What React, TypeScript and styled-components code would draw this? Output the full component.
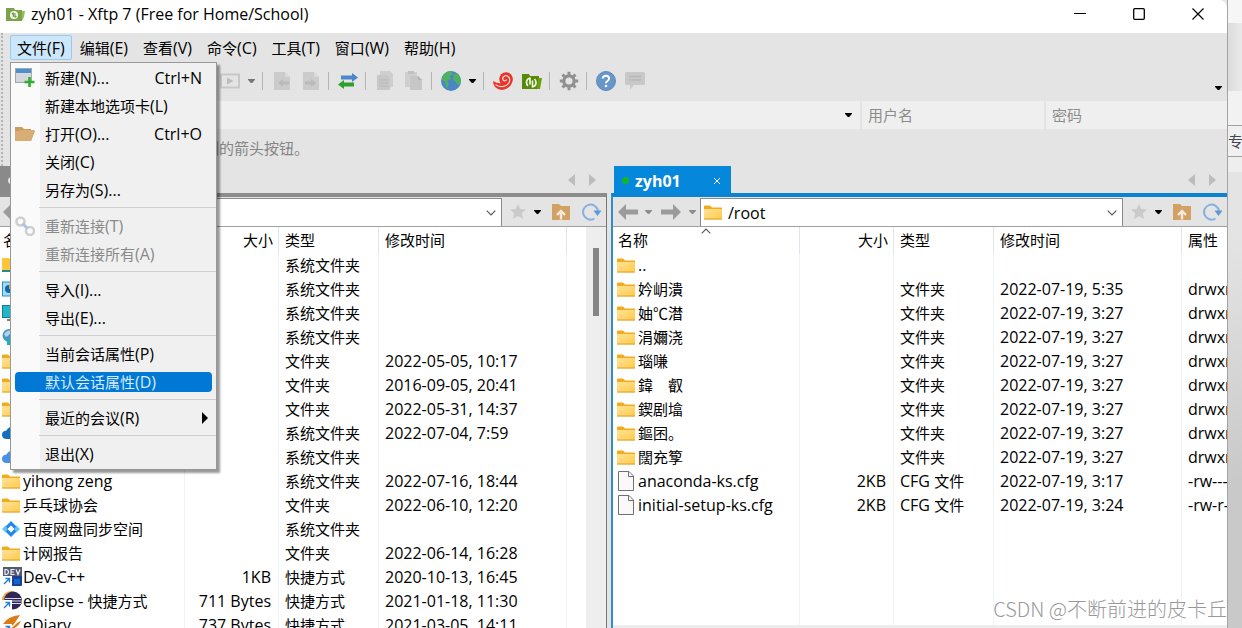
import React from "react";
import styled, { createGlobalStyle, css } from "styled-components";

const GlobalStyle = createGlobalStyle`
  *, *::before, *::after { box-sizing: border-box; }
  body {
    margin: 0;
    background: #e6e6e6;
    color: #000;
    font: 15px/20px "Open Sans", "Noto Sans CJK SC", sans-serif;
    overflow: hidden;
  }
  button, input { font: inherit; color: inherit; }
  button { border: 0; padding: 0; background: none; }
  svg { display: block; flex: none; }
`;

/* ---------- text: Latin runs are set one pixel larger than the CJK runs ---------- */

const Latin = styled.span`
  font-size: 16px;
`;

function Label({ text }: { text: string }) {
  const runs = text.match(/[\u0000-\u024f]+|[^\u0000-\u024f]+/g) ?? [];
  return (
    <>
      {runs.map((run, i) =>
        run.charCodeAt(0) < 0x250 ? <Latin key={i}>{run}</Latin> : <React.Fragment key={i}>{run}</React.Fragment>
      )}
    </>
  );
}

/* ---------- icons ---------- */

const Caret = ({ color = "#000" }: { color?: string }) => (
  <svg width="7" height="4" viewBox="0 0 7 4"><path d="M0 0h7v.8L4.200 4H2.800L0 .8z" fill={color} /></svg>
);

const Chevron = ({ up }: { up?: boolean }) => (
  <svg width="10" height="6" viewBox="0 0 10 6">
    <path d={up ? "M.7 5.3 5 1l4.3 4.3" : "M.7.7 5 5 9.3.7"} fill="none" stroke="#555" strokeWidth="1.1" />
  </svg>
);

const FolderIcon = () => (
  <svg width="18" height="15" viewBox="0 0 18 15">
    <defs>
      <linearGradient id="folder" x1="0" y1="0" x2="1" y2="1">
        <stop offset="0" stopColor="#ffe29a" /><stop offset="1" stopColor="#ffca45" />
      </linearGradient>
    </defs>
    <path d="M0 1.5Q0 .5 1 .5h5l2 2h9.500q.5 0 .5.5v4H0z" fill="#f1ac1c" />
    <rect y="4" width="18" height="10.500" rx=".8" fill="url(#folder)" />
    <path d="M0 14h18" stroke="#dfa02c" />
  </svg>
);

const FileIcon = () => (
  <svg width="18" height="20" viewBox="0 0 18 20">
    <path d="M1.500.5H12L16.500 5v14.500h-15z" fill="#faf8f8" stroke="#707070" />
    <path d="M11.500.5V5.500h5" fill="none" stroke="#707070" />
  </svg>
);

const ShortcutBadge = () => (
  <g>
    <rect y="9" width="10" height="10" fill="#fff" />
    <path d="M2 17l5-5M3.500 11.500H7.500V15.500" fill="none" stroke="#1f7fd0" strokeWidth="1.400" />
  </g>
);

const DevIcon = () => (
  <svg width="20" height="20" viewBox="0 0 20 20">
    <rect x="1" width="19" height="19" rx="1" fill="#1d3f8f" />
    <rect x="1" width="19" height="9" fill="#545a72" />
    <path d="M3 2.500v5h1.500q2-.5 2-2.500t-2-2.500zM12.500 2.500H9v5h3.500M9 5h3M14 2.500l2 5 2-5" fill="none" stroke="#f2f2f6" strokeWidth="1.200" />
    <path d="M12 12h6v5h-6z" fill="#0e67c9" />
    <ShortcutBadge />
  </svg>
);

const EclipseIcon = () => (
  <svg width="20" height="20" viewBox="0 0 20 20">
    <circle cx="9" cy="9" r="9" fill="#f2a33c" />
    <circle cx="11" cy="9.500" r="9" fill="#2f2657" />
    <path d="M3 7.500h16M3 10h17M3 12.500h16" stroke="#d9d6ea" strokeWidth="1.200" />
    <ShortcutBadge />
  </svg>
);

const DiaryIcon = () => (
  <svg width="20" height="20" viewBox="0 0 20 20">
    <path d="M1 9Q6 1 18 0l-6 9 7-3Q14 16 3 14z" fill="#dd7c17" />
    <path d="M3 10q4 4 8 1l8-8" fill="none" stroke="#fff" strokeWidth="1.500" />
    <ShortcutBadge />
  </svg>
);

const BaiduSyncIcon = () => (
  <svg width="18" height="16" viewBox="0 0 18 16">
    <path d="M9 0l7 7-2 1 2 1-7 7-7-7 2-1-2-1z" fill="#2486ea" />
    <path d="M3.500 4.500 0 8l3.500 3.500L5.500 8z" fill="#58c7f5" /><path d="M14.500 4.500 18 8l-3.500 3.500L12.500 8z" fill="#58c7f5" />
    <path d="M9 4.500 12.500 8 9 11.500 5.500 8z" fill="#fff" />
  </svg>
);

const UserFolderIcon = () => (
  <svg width="18" height="16" viewBox="0 0 18 16">
    <path d="M0 1h7l2 2h9v12H0z" fill="#fcc63c" /><path d="M0 13h18v2H0z" fill="#2b8a8a" />
  </svg>
);

const ControlPanelIcon = () => (
  <svg width="18" height="16" viewBox="0 0 18 16">
    <rect x=".5" y="1" width="17" height="14" fill="#9bdcf7" stroke="#2b8fc7" />
    <circle cx="7" cy="8" r="4" fill="#1465b4" /><path d="M7 8V3.500A4.500 4.500 0 0 1 11.500 8z" fill="#f4a020" />
  </svg>
);

const ComputerIcon = () => (
  <svg width="18" height="16" viewBox="0 0 18 16">
    <rect x=".5" y=".5" width="17" height="12" fill="#25b5c9" stroke="#147a96" /><path d="M5 15h8" stroke="#555" strokeWidth="1.500" />
  </svg>
);

const NetworkIcon = () => (
  <svg width="18" height="17" viewBox="0 0 18 17">
    <circle cx="7" cy="6.500" r="6.500" fill="#4b96c2" /><path d="M2 5q4-5 7-3-1 4-5 6z" fill="#a9d8ee" />
    <rect x="5" y="9" width="11" height="7" fill="#23adc0" />
  </svg>
);

const CloudIcon = ({ color }: { color: string }) => (
  <svg width="20" height="14" viewBox="0 0 20 14">
    <path d="M5 13Q0 13 0 8.500 0 5 4.500 4.500 7 0 11.500 1q3.500 1 4 4.500 4 .5 4 4 0 3.500-4 3.500z" fill={color} />
  </svg>
);

const AppIcon = () => (
  <svg width="20" height="15" viewBox="0 0 20 15">
    <path d="M0 1h8l1 2h7v11H0z" fill="#7ba34a" /><path d="M16 4h3l-1 6-2 4z" fill="#93bd5f" />
    <circle cx="8" cy="8" r="4" fill="#f4f8ee" />
    <path d="M7.300 5.500v4.500M8.900 6v4.500M7.300 5.700 5.800 7.300M8.900 10.400l1.500-1.600" stroke="#6d9440" strokeWidth="1.100" />
  </svg>
);

const NewWindowIcon = () => (
  <svg width="20" height="20" viewBox="0 0 20 20">
    <rect x=".5" y=".5" width="16" height="14" fill="#d3d7da" stroke="#a2a8ad" />
    <rect x="1" y="1" width="15" height="4" fill="#4a90cf" />
    <path d="M14.500 9v10M9.500 14h10" stroke="#2fae2f" strokeWidth="2.600" />
  </svg>
);

const OpenFolderIcon = () => (
  <svg width="20" height="16" viewBox="0 0 20 16">
    <path d="M0 1h7l2 2h7v2h4l-4 10H0z" fill="#cc9a5c" /><path d="M0 5h4l2-1h13.500L16 15H0z" fill="#d9ae76" />
  </svg>
);

const LinkIcon = () => (
  <svg width="20" height="20" viewBox="0 0 20 20" fill="none">
    <circle cx="5.500" cy="5.500" r="4" stroke="#cfcfcf" strokeWidth="2.600" />
    <circle cx="15" cy="15" r="4" stroke="#cfcfcf" strokeWidth="2.600" />
    <path d="M7.500 7.500l5 5" stroke="#a9c4e4" strokeWidth="3" />
  </svg>
);

const PlayBoxIcon = () => (
  <svg width="20" height="16" viewBox="0 0 20 16">
    <rect x="1" y="1.500" width="18" height="13" fill="none" stroke="#c8c8c8" strokeWidth="2" /><path d="M7 4.500l6.500 3.500L7 11.500z" fill="#bdbdbd" />
  </svg>
);

const DocArrowIcon = ({ left }: { left?: boolean }) => (
  <svg width="16" height="18" viewBox="0 0 16 18">
    <path d="M0 0h11l5 5v13H0z" fill="#cbcbcb" /><path d="M11 0v5h5z" fill="#dadada" />
    <path d={left ? "M4 11l5-4v2.500h6v3H9V15z" : "M13 11 8 7v2.500H2v3h6V15z"} fill="#bababa" />
  </svg>
);

const TransferIcon = () => (
  <svg width="20" height="16" viewBox="0 0 20 16">
    <path d="M3 2.500h11V0l6 4.500L14 9V6.500H3z" fill="#4a87cc" />
    <path d="M16 9.500H6V7L0 11.500 6 16v-2.500h10z" fill="#2ca02c" />
  </svg>
);

const CopyIcon = () => (
  <svg width="18" height="20" viewBox="0 0 18 20">
    <path d="M4 0h10l3 3v13H4z" fill="#cfcfcf" /><path d="M1 4h10l3 3v12H1z" fill="#c8c8c8" />
    <path d="M3 9h9M3 12h9M3 15h9" stroke="#b8b8b8" />
  </svg>
);

const PasteIcon = () => (
  <svg width="18" height="20" viewBox="0 0 18 20">
    <path d="M0 1h12v15H0z" fill="#cfcfcf" /><path d="M3 0h6v3H3z" fill="#c0c0c0" />
    <path d="M5 5h8l4 4v10H5z" fill="#c6c6c6" /><path d="M13 5v4h4z" fill="#b4b4b4" />
  </svg>
);

const GlobeIcon = () => (
  <svg width="20" height="20" viewBox="0 0 20 20">
    <circle cx="10" cy="10" r="10" fill="#4a86c4" />
    <path d="M1 6Q4 0 10 .3L12 3 9 5l1 3-4 2 2 3-2 5Q4 14 4 11L1 9zM13 3l4-.2Q20 6 20 11l-3 4-2-4-3-2z" fill="#4fb061" />
  </svg>
);

const SwirlIcon = () => (
  <svg width="20" height="19" viewBox="0 0 20 19" fill="none">
    <path d="M0 9Q5 12 9 11L19 4q2 8-5 12.500Q7 20 2 15 0 12 0 9z" fill="#e8352b" />
    <circle cx="13" cy="7" r="6.800" fill="#e8352b" />
    <path d="M3 13q5 3 10 .5 4.500-2.500 3.500-7Q15 3 11.800 3.800 9 5 10 7.800q1.500 2 3.300.2" stroke="#f3d3cf" strokeWidth="1.300" strokeLinecap="round" />
  </svg>
);

const XftpIcon = () => (
  <svg width="20" height="17" viewBox="0 0 20 17">
    <path d="M0 1h7l1 2h9v13H0z" fill="#578a08" /><path d="M16 5h4l-2 11h-3z" fill="#6aa112" />
    <path d="M8 4.500v7M8 5Q4.500 6 4.500 9.500q0 2 1.500 3.500M10.500 14.500v-7M10.500 14q3.500-1 3.500-4.500 0-2-1.500-3.500" fill="none" stroke="#f1f7e6" strokeWidth="1.700" />
  </svg>
);

const GearIcon = () => (
  <svg width="20" height="20" viewBox="0 0 20 20" fill="none" stroke="#8f8f8f">
    <circle cx="10" cy="10" r="5.200" strokeWidth="3.200" />
    <path d="M10 .8v3M10 16.200v3M.8 10h3M16.200 10h3M3.500 3.500l2.100 2.100M14.400 14.400l2.100 2.100M3.500 16.500l2.100-2.100M14.400 5.600l2.100-2.100" strokeWidth="3" />
  </svg>
);

const HelpIcon = () => (
  <svg width="20" height="20" viewBox="0 0 20 20">
    <circle cx="10" cy="10" r="9.500" fill="#6796c9" stroke="#5b8bc2" />
    <path d="M6.800 7.500Q7 4.800 10 4.800q3 0 3 2.700 0 1.500-1.600 2.500-1.400.8-1.400 2.200" fill="none" stroke="#fff" strokeWidth="2" />
    <circle cx="10" cy="15" r="1.300" fill="#fff" />
  </svg>
);

const ChatIcon = () => (
  <svg width="20" height="18" viewBox="0 0 20 18">
    <path d="M1.500 0h17Q20 0 20 1.500v10q0 1.500-1.500 1.500H9l-4 5v-5H1.500Q0 13 0 11.500v-10Q0 0 1.500 0z" fill="#c8c8c8" />
    <path d="M4 4.500h12M4 8h12" stroke="#b8b8b8" strokeWidth="1.500" />
  </svg>
);

const NavArrow = ({ back }: { back?: boolean }) => (
  <svg width="20" height="16" viewBox="0 0 20 16">
    <path d={back ? "M0 8l8-8v5.500h12v5H8V16z" : "M20 8l-8-8v5.500H0v5h12V16z"} fill="#9b9b9b" />
  </svg>
);

const StarIcon = () => (
  <svg width="16" height="15" viewBox="0 0 16 15">
    <path d="M8 0l2.300 5 5.700.6-4.200 3.600L13 15l-5-3-5 3 1.200-5.800L0 5.600 5.700 5z" fill="#cacaca" />
  </svg>
);

const FolderUpIcon = () => (
  <svg width="18" height="16" viewBox="0 0 18 16">
    <path d="M0 0h7l2 2h9v14H0z" fill="#d2a264" />
    <path d="M9 15.500V9M5 11 9 7l4 4" fill="none" stroke="#f4ebdf" strokeWidth="2.400" />
  </svg>
);

const RefreshIcon = () => (
  <svg width="20" height="18" viewBox="0 0 20 18">
    <path d="M12.500 15.500A7.500 7.500 0 1 1 16 8" fill="none" stroke="#85b0e0" strokeWidth="2" />
    <path d="M11.500 7.500H19.500L15.500 13z" fill="#5f99d6" />
  </svg>
);

const TabArrow = ({ left }: { left?: boolean }) => (
  <svg width="7" height="12" viewBox="0 0 7 12"><path d={left ? "M7 0v12L0 6z" : "M0 0v12l7-6z"} fill="#bcbcbc" /></svg>
);

/* ---------- frame ---------- */

const Page = styled.div`
  display: grid;
  grid-template-columns: minmax(0, 1fr) 15px;
  height: 100vh;
`;

const Window = styled.main`
  position: relative;
  display: flex;
  flex-direction: column;
  min-height: 0;
  background: #e4e4e4;
  border-top-right-radius: 8px;
`;

const Behind = styled.aside`
  display: flex;
  flex-direction: column;
  overflow: hidden;
  border-left: 1px solid #a3a3a3;
  background: linear-gradient(#e4e4e4 240px, #c9c9c9 480px);
`;

const BehindStrip = styled.div<{ $height: number; $bg: string; $line?: boolean }>`
  height: ${(p) => p.$height}px;
  flex: none;
  background: ${(p) => p.$bg};
  color: #445;
  line-height: 30px;
  ${(p) => p.$line && css`border-top: 1px solid #a0a0a0; border-bottom: 1px solid #a0a0a0;`}
`;

const TitleBar = styled.header`
  display: flex;
  align-items: center;
  flex: none;
  height: 33px;
  padding: 0 0 5px 6px;
  background: #fff;
  border-top-right-radius: 8px;
`;

const Title = styled.h1`
  flex: 1;
  margin: 0 0 0 5px;
  font-size: 16px;
  font-weight: 400;
`;

const CaptionButton = styled.button`
  display: grid;
  place-items: center;
  width: 59px;
  height: 28px;
`;

/* ---------- menu ---------- */

const MenuBar = styled.nav`
  position: relative;
  display: flex;
  flex: none;
  gap: 1px;
  height: 31px;
  padding: 2px 0 4px 10px;
`;

const MenuButton = styled.button<{ $open?: boolean }>`
  padding: 0 6px;
  border: 1px solid ${(p) => (p.$open ? "#99c9ef" : "transparent")};
  border-radius: 2px;
  background: ${(p) => (p.$open ? "#cce6fb" : "none")};
`;

const Menu = styled.div`
  position: absolute;
  z-index: 2;
  top: 29px;
  left: 10px;
  display: flex;
  flex-direction: column;
  width: 207px;
  padding: 1px 0;
  border: 1px solid #989898;
  background: linear-gradient(90deg, #fafafa 29px, #f0f0f0 29px);
  box-shadow: 3px 3px 2px rgba(0, 0, 0, 0.4);
`;

const MenuItem = styled.button<{ $active?: boolean; $muted?: boolean }>`
  display: grid;
  grid-template-columns: 30px 1fr auto;
  align-items: center;
  height: 20px;
  margin: 4px;
  padding-right: 10px;
  border-radius: 4px;
  text-align: left;
  color: ${(p) => (p.$active ? "#d8ebfa" : p.$muted ? "#8a8a8a" : "#000")};
  background: ${(p) => (p.$active ? "#0078d4" : "none")};
`;

const SubmenuMark = styled.span`
  margin-right: -10px;
`;

const MenuRule = styled.hr`
  height: 1px;
  margin: 3px 0 4px 28px;
  border: 0;
  background: #cfcfcf;
`;

type Entry = { text: string; keys?: string; icon?: React.ReactNode; muted?: boolean; active?: boolean; sub?: boolean } | null;

const fileMenu: Entry[] = [
  { text: "新建(N)...", keys: "Ctrl+N", icon: <NewWindowIcon /> },
  { text: "新建本地选项卡(L)" },
  { text: "打开(O)...", keys: "Ctrl+O", icon: <OpenFolderIcon /> },
  { text: "关闭(C)" },
  { text: "另存为(S)..." },
  null,
  { text: "重新连接(T)", muted: true, icon: <LinkIcon /> },
  { text: "重新连接所有(A)", muted: true },
  null,
  { text: "导入(I)..." },
  { text: "导出(E)..." },
  null,
  { text: "当前会话属性(P)" },
  { text: "默认会话属性(D)", active: true },
  null,
  { text: "最近的会议(R)", sub: true },
  null,
  { text: "退出(X)" },
];

/* ---------- toolbars ---------- */

const Upper = styled.div`
  position: relative;
  flex: none;
  &::before {
    content: "";
    position: absolute;
    top: 0;
    bottom: 0;
    left: 1px;
    border-left: 2px dotted #b4b4b4;
  }
`;

const Toolbar = styled.div`
  display: flex;
  align-items: center;
  height: 37px;
  padding: 0 5px 3px 9px;
`;

const ToolButton = styled.button<{ $width?: number }>`
  display: grid;
  place-items: center;
  flex: none;
  width: ${(p) => p.$width ?? 29}px;
  height: 28px;
`;

const ToolRule = styled.span`
  flex: none;
  width: 1px;
  height: 18px;
  margin: 0 4px 0 3px;
  background: #b5b5b5;
`;

const Overflow = styled(ToolButton)`
  margin-left: auto;
  align-self: flex-end;
  height: 20px;
`;

const Connect = styled.form`
  display: grid;
  grid-template-columns: minmax(0, 1fr) 182px 181px;
  gap: 2px;
  height: 28px;
  padding-left: 10px;
`;

const Field = styled.label`
  display: flex;
  align-items: center;
  padding: 0 8px 0 6px;
  background: #efefef;
`;

const TextInput = styled.input`
  flex: 1;
  min-width: 0;
  padding: 0;
  border: 0;
  outline: 0;
  background: none;
  &::placeholder { color: #8c8c8c; opacity: 1; }
`;

const Hint = styled.p`
  height: 37px;
  margin: 0;
  padding: 9px 0 0 39px;
  color: #868686;
`;

/* ---------- panes ---------- */

const Panes = styled.div`
  display: grid;
  grid-template-columns: 607fr 616fr;
  gap: 4px;
  flex: 1;
  min-height: 0;
`;

const Pane = styled.section`
  display: flex;
  flex-direction: column;
  min-width: 0;
  min-height: 0;
`;

const TabRow = styled.div`
  display: flex;
  align-items: center;
  gap: 14px;
  flex: none;
  height: 27px;
  padding: 0 11px 0 0;
`;

const Tab = styled.div<{ $active?: boolean }>`
  display: flex;
  align-items: center;
  gap: 6px;
  width: 117px;
  height: 27px;
  margin: 0 auto 0 ${(p) => (p.$active ? "3px" : "0")};
  padding: 2px 10px 0 8px;
  color: #fff;
  font-size: 16px;
  font-weight: 700;
  background: ${(p) => (p.$active ? "#0588dc" : "#8a8a8a")};
`;

const Dot = styled.span<{ $color: string }>`
  width: 7px;
  height: 7px;
  border-radius: 50%;
  background: ${(p) => p.$color};
`;

const CloseTab = styled.button`
  margin-left: auto;
`;

const Body = styled.div<{ $active?: boolean }>`
  display: flex;
  flex-direction: column;
  flex: 1;
  min-height: 0;
  border-top: 4px solid ${(p) => (p.$active ? "#0a84d2" : "#8c8c8c")};
  ${(p) => (p.$active ? css`border-left: 2px solid #2f8fc4;` : css`border-right: 1px solid #777;`)}
`;

const PathBar = styled.div<{ $inset: number }>`
  display: flex;
  align-items: center;
  flex: none;
  height: 30px;
  padding: 0 4px 0 ${(p) => p.$inset}px;
  border-bottom: 1px solid #a0a0a0;
`;

const NavButton = styled(ToolButton)<{ $width: number }>`
  height: 26px;
`;

const PathBox = styled.label`
  display: flex;
  align-items: center;
  gap: 6px;
  flex: 1;
  min-width: 0;
  height: 28px;
  margin: 1px 0 0;
  padding: 0 5px 0 3px;
  border: 1px solid #8a8a8a;
  border-bottom: 0;
  background: #fff;
  font-size: 16px;
`;

const ListArea = styled.div`
  display: flex;
  flex: 1;
  min-height: 0;
  overflow: hidden;
  background: #fff;
`;

const ListClip = styled.div`
  flex: 1;
  min-width: 0;
  overflow: hidden;
`;

const ScrollTrack = styled.div`
  flex: none;
  width: 20px;
  padding: 21px 0 0 7px;
  background: #eeeeee;
`;

const ScrollThumb = styled.div`
  width: 6px;
  height: 68px;
  background: #868686;
`;

const StatusEdge = styled.div`
  flex: none;
  height: 3px;
  background: #ececec;
`;

const List = styled.table`
  width: 100%;
  height: 100%;
  table-layout: fixed;
  border-collapse: separate;
  border-spacing: 0;
`;

const cell = css<{ $right?: boolean }>`
  height: 24px;
  padding: 0 7px 2px 6px;
  border-right: 1px solid #eef3f6;
  text-align: ${(p) => (p.$right ? "right" : "left")};
  font-weight: 400;
  white-space: nowrap;
  overflow: hidden;
  &:last-child { border-right: 0; padding-right: 0; }
`;

const Head = styled.th<{ $right?: boolean }>`
  ${cell}
  position: relative;
  height: 27px;
  padding-right: 5px;
  border-right-color: #dfe5e8;
`;

const Cell = styled.td<{ $right?: boolean }>`
  ${cell}
`;

const NameCell = styled(Cell)<{ $inset: number }>`
  padding-left: ${(p) => p.$inset}px;
  padding-right: 0;
`;

const NameHead = styled(Head)<{ $inset: number }>`
  padding-left: ${(p) => p.$inset + 1}px;
`;

const SortMark = styled.span`
  position: absolute;
  top: 1px;
  left: 50%;
  transform: translateX(-50%);
`;

const Name = styled.span`
  display: flex;
  align-items: center;
  gap: 3px;
`;

const IconSlot = styled.span`
  display: grid;
  place-items: center;
  flex: none;
  width: 18px;
  height: 20px;
`;

const Filler = styled.tr`
  td { height: auto; padding: 0; }
`;

const Watermark = styled.div`
  position: absolute;
  z-index: 1;
  right: 0;
  bottom: 5px;
  font: 300 20px/28px "Noto Sans CJK SC", sans-serif;
  color: #999;
`;

/* ---------- data ---------- */

type Row = { icon: React.ReactNode; name?: string; size?: string; type?: string; date?: string; attr?: string };

const folder = <FolderIcon />;
const DIR = "文件夹";
const SYS = "系统文件夹";
const LNK = "快捷方式";

const localRows: Row[] = [
  { icon: <UserFolderIcon />, type: SYS },
  { icon: <ControlPanelIcon />, type: SYS },
  { icon: <ComputerIcon />, type: SYS },
  { icon: <NetworkIcon />, type: SYS },
  { icon: folder, type: DIR, date: "2022-05-05, 10:17" },
  { icon: folder, type: DIR, date: "2016-09-05, 20:41" },
  { icon: folder, type: DIR, date: "2022-05-31, 14:37" },
  { icon: <CloudIcon color="#1470bd" />, type: SYS, date: "2022-07-04, 7:59" },
  { icon: <CloudIcon color="#4a8fe8" />, type: SYS },
  { icon: folder, name: "yihong zeng", type: SYS, date: "2022-07-16, 18:44" },
  { icon: folder, name: "乒乓球协会", type: DIR, date: "2022-06-10, 12:20" },
  { icon: <BaiduSyncIcon />, name: "百度网盘同步空间", type: SYS },
  { icon: folder, name: "计网报告", type: DIR, date: "2022-06-14, 16:28" },
  { icon: <DevIcon />, name: "Dev-C++", size: "1KB", type: LNK, date: "2020-10-13, 16:45" },
  { icon: <EclipseIcon />, name: "eclipse - 快捷方式", size: "711 Bytes", type: LNK, date: "2021-01-18, 11:30" },
  { icon: <DiaryIcon />, name: "eDiary", size: "737 Bytes", type: LNK, date: "2021-03-05, 14:11" },
];

const remoteDir = (name: string, date: string): Row => ({ icon: folder, name, type: DIR, date, attr: "drwxr-xr-x" });

const remoteRows: Row[] = [
  { icon: folder, name: ".." },
  remoteDir("妗岄潰", "2022-07-19, 5:35"),
  remoteDir("妯℃澘", "2022-07-19, 3:27"),
  remoteDir("涓嬭浇", "2022-07-19, 3:27"),
  remoteDir("瑙嗛", "2022-07-19, 3:27"),
  remoteDir("鍏　叡", "2022-07-19, 3:27"),
  remoteDir("鍥剧墖", "2022-07-19, 3:27"),
  remoteDir("鏂囨。", "2022-07-19, 3:27"),
  remoteDir("闊充箰", "2022-07-19, 3:27"),
  { icon: <FileIcon />, name: "anaconda-ks.cfg", size: "2KB", type: "CFG 文件", date: "2022-07-19, 3:17", attr: "-rw-------" },
  { icon: <FileIcon />, name: "initial-setup-ks.cfg", size: "2KB", type: "CFG 文件", date: "2022-07-19, 3:24", attr: "-rw-r--r--" },
];

function FileList({ rows, inset, nameWidth, remote }: { rows: Row[]; inset: number; nameWidth: number; remote?: boolean }) {
  return (
    <List>
      <colgroup>
        <col width={nameWidth} />
        <col width="94" />
        <col width="100" />
        <col width="188" />
        <col />
      </colgroup>
      <thead>
        <tr>
          <NameHead $inset={inset}>
            名称
            {remote && <SortMark><Chevron up /></SortMark>}
          </NameHead>
          <Head $right>大小</Head>
          <Head>类型</Head>
          <Head>修改时间</Head>
          <Head>{remote ? "属性" : ""}</Head>
        </tr>
      </thead>
      <tbody>
        {rows.map((r, i) => (
          <tr key={i}>
            <NameCell $inset={inset}>
              <Name><IconSlot>{r.icon}</IconSlot><span><Label text={r.name ?? ""} /></span></Name>
            </NameCell>
            <Cell $right><Label text={r.size ?? ""} /></Cell>
            <Cell><Label text={r.type ?? ""} /></Cell>
            <Cell><Label text={r.date ?? ""} /></Cell>
            <Cell><Label text={r.attr ?? ""} /></Cell>
          </tr>
        ))}
        <Filler><Cell /><Cell /><Cell /><Cell /><Cell /></Filler>
      </tbody>
    </List>
  );
}

function PathTools({ inset, path }: { inset: number; path?: string }) {
  return (
    <PathBar $inset={inset}>
      <NavButton $width={20} aria-label="后退"><NavArrow back /></NavButton>
      <NavButton $width={20} aria-label="后退历史"><Caret color="#8d8d8d" /></NavButton>
      <NavButton $width={26} aria-label="前进"><NavArrow /></NavButton>
      <NavButton $width={16} aria-label="前进历史"><Caret color="#8d8d8d" /></NavButton>
      <PathBox>
        <FolderIcon />
        <TextInput aria-label="路径" defaultValue={path} />
        <Chevron />
      </PathBox>
      <NavButton $width={32} aria-label="收藏"><StarIcon /></NavButton>
      <NavButton $width={7} aria-label="收藏列表"><Caret /></NavButton>
      <NavButton $width={40} aria-label="上级目录"><FolderUpIcon /></NavButton>
      <NavButton $width={21} aria-label="刷新"><RefreshIcon /></NavButton>
    </PathBar>
  );
}

export default function App() {
  return (
    <Page>
      <GlobalStyle />
      <Window>
        <TitleBar>
          <AppIcon />
          <Title>zyh01 - Xftp 7 (Free for Home/School)</Title>
          <CaptionButton aria-label="最小化">
            <svg width="12" height="12"><path d="M0 5.500h12" stroke="#000" /></svg>
          </CaptionButton>
          <CaptionButton aria-label="最大化">
            <svg width="12" height="12"><rect x=".7" y=".7" width="10.600" height="10.600" rx="1" fill="none" stroke="#000" strokeWidth="1.300" /></svg>
          </CaptionButton>
          <CaptionButton aria-label="关闭">
            <svg width="12" height="12"><path d="M.5.5l11 11M11.500.5l-11 11" stroke="#000" strokeWidth="1.200" /></svg>
          </CaptionButton>
        </TitleBar>

        <Upper>
          <MenuBar>
            {["文件(F)", "编辑(E)", "查看(V)", "命令(C)", "工具(T)", "窗口(W)", "帮助(H)"].map((m, i) => (
              <MenuButton key={m} $open={i === 0}><Label text={m} /></MenuButton>
            ))}
            <Menu role="menu">
              {fileMenu.map((e, i) =>
                e === null ? (
                  <MenuRule key={i} />
                ) : (
                  <MenuItem key={i} role="menuitem" $active={e.active} $muted={e.muted} disabled={e.muted}>
                    <span>{e.icon}</span>
                    <span><Label text={e.text} /></span>
                    {e.keys && <span><Label text={e.keys} /></span>}
                    {e.sub && <SubmenuMark><svg width="6" height="12"><path d="M0 0v12l6-6z" /></svg></SubmenuMark>}
                  </MenuItem>
                )
              )}
            </Menu>
          </MenuBar>

          <Toolbar>
            <ToolButton aria-label="新建"><NewWindowIcon /></ToolButton>
            <ToolRule />
            <ToolButton aria-label="打开"><OpenFolderIcon /></ToolButton>
            <ToolRule />
            <ToolButton aria-label="连接"><LinkIcon /></ToolButton>
            <ToolButton aria-label="断开"><LinkIcon /></ToolButton>
            <ToolRule />
            <ToolButton aria-label="属性"><GearIcon /></ToolButton>
            <ToolButton aria-label="复制"><CopyIcon /></ToolButton>
            <ToolRule />
            <ToolButton aria-label="运行"><PlayBoxIcon /></ToolButton>
            <ToolButton $width={15} aria-label="运行选项"><Caret color="#777" /></ToolButton>
            <ToolRule />
            <ToolButton aria-label="下载"><DocArrowIcon left /></ToolButton>
            <ToolButton aria-label="上传"><DocArrowIcon /></ToolButton>
            <ToolRule />
            <ToolButton aria-label="传输"><TransferIcon /></ToolButton>
            <ToolRule />
            <ToolButton aria-label="复制文件"><CopyIcon /></ToolButton>
            <ToolButton aria-label="粘贴文件"><PasteIcon /></ToolButton>
            <ToolRule />
            <ToolButton aria-label="编码"><GlobeIcon /></ToolButton>
            <ToolButton $width={15} aria-label="编码选项"><Caret /></ToolButton>
            <ToolRule />
            <ToolButton aria-label="Xshell"><SwirlIcon /></ToolButton>
            <ToolButton aria-label="Xftp"><XftpIcon /></ToolButton>
            <ToolRule />
            <ToolButton aria-label="选项"><GearIcon /></ToolButton>
            <ToolRule />
            <ToolButton aria-label="帮助"><HelpIcon /></ToolButton>
            <ToolButton aria-label="反馈"><ChatIcon /></ToolButton>
            <Overflow $width={8} aria-label="更多"><Caret /></Overflow>
          </Toolbar>

          <Connect>
            <Field><TextInput aria-label="主机" /><Caret /></Field>
            <Field><TextInput aria-label="用户名" placeholder="用户名" /></Field>
            <Field><TextInput aria-label="密码" type="password" placeholder="密码" /></Field>
          </Connect>
          <Hint>要添加当前会话，点击左侧的箭头按钮。</Hint>
        </Upper>

        <Panes>
          <Pane>
            <TabRow>
              <Tab><Dot $color="#e4e4e4" /></Tab>
              <TabArrow left /><TabArrow />
            </TabRow>
            <Body>
              <PathTools inset={3} />
              <ListArea>
                <ListClip><FileList rows={localRows} inset={2} nameWidth={185} /></ListClip>
                <ScrollTrack><ScrollThumb /></ScrollTrack>
              </ListArea>
            </Body>
          </Pane>
          <Pane>
            <TabRow>
              <Tab $active>
                <Dot $color="#12b52c" />
                zyh01
                <CloseTab aria-label="关闭选项卡">
                  <svg width="8" height="8"><path d="M1 1l6 6M7 1L1 7" stroke="#fff" /></svg>
                </CloseTab>
              </Tab>
              <TabArrow left /><TabArrow />
            </TabRow>
            <Body $active>
              <PathTools inset={5} path="/root" />
              <ListArea>
                <ListClip><FileList rows={remoteRows} inset={4} nameWidth={187} remote /></ListClip>
              </ListArea>
              <StatusEdge />
            </Body>
          </Pane>
        </Panes>
        <Watermark>CSDN @不断前进的皮卡丘</Watermark>
      </Window>
      <Behind>
        <BehindStrip $height={23} $bg="#f6f6f6" />
        <BehindStrip $height={68} $bg="linear-gradient(90deg, #dcdcdc, #e9e9e9)" />
        <BehindStrip $height={34} $bg="#f2f2f2" />
        <BehindStrip $height={32} $bg="#f0f0f0" $line>专</BehindStrip>
        <BehindStrip $height={15} $bg="#eeeeee" />
      </Behind>
    </Page>
  );
}
